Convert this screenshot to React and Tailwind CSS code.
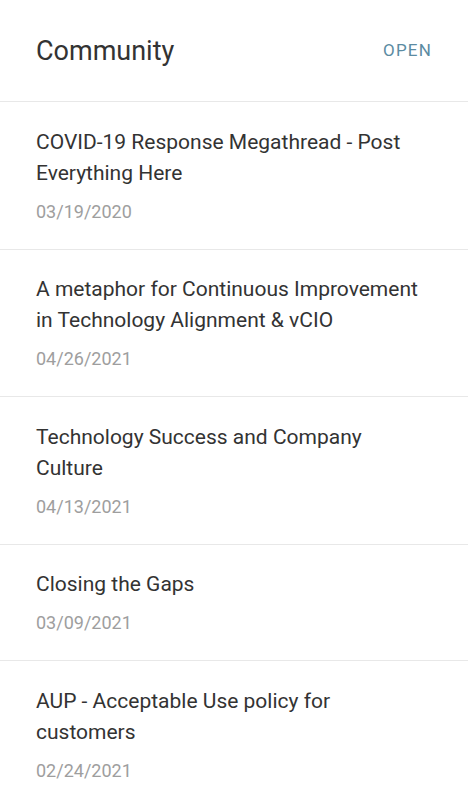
export default function App() {
  const items = [
    { title: "COVID-19 Response Megathread - Post Everything Here", date: "03/19/2020" },
    { title: "A metaphor for Continuous Improvement in Technology Alignment & vCIO", date: "04/26/2021" },
    { title: "Technology Success and Company Culture", date: "04/13/2021" },
    { title: "Closing the Gaps", date: "03/09/2021" },
    { title: "AUP - Acceptable Use policy for customers", date: "02/24/2021" },
  ];
  return (
    <div className="w-[468px] h-[805px] overflow-hidden bg-white" style={{ fontFamily: "Roboto, 'Liberation Sans', sans-serif" }}>
      <div className="flex h-[102px] items-center justify-between border-b border-[#e8e8e8] pl-9 pr-9">
        <h1 className="text-[27px] leading-[34px] text-[#333333]">Community</h1>
        <button className="text-[17px] uppercase tracking-[0.07em] text-[#5b8ba2]">Open</button>
      </div>
      {items.map((it, i) => (
        <div key={i} className="border-b border-[#e8e8e8] pl-9 pr-[40px] pt-[24.5px] pb-[25px]">
          <div className="text-[21px] leading-[31px] text-[#333333]">{it.title}</div>
          <div className="mt-[11px] text-[18px] leading-[24px] text-[#9e9e9e]">{it.date}</div>
        </div>
      ))}
    </div>
  );
}
